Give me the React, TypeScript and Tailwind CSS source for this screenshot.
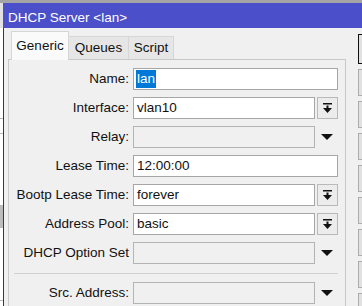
import { ReactNode } from "react";

type Kind = "text" | "select" | "disabled";

interface Row {
  label: string;
  value?: string;
  kind: Kind;
  selected?: boolean;
}

const rows: Row[] = [
  { label: "Name:", value: "lan", kind: "text", selected: true },
  { label: "Interface:", value: "vlan10", kind: "select" },
  { label: "Relay:", kind: "disabled" },
  { label: "Lease Time:", value: "12:00:00", kind: "text" },
  { label: "Bootp Lease Time:", value: "forever", kind: "select" },
  { label: "Address Pool:", value: "basic", kind: "select" },
  { label: "DHCP Option Set", kind: "disabled" },
];

const DropIcon = () => (
  <svg width="9" height="10" viewBox="0 0 9 10">
    <rect x="0" y="0" width="9" height="1.5" fill="#111" />
    <rect x="3.5" y="2.5" width="2" height="3" fill="#111" />
    <polygon points="0,5 9,5 4.5,10" fill="#111" />
  </svg>
);

const Triangle = () => (
  <svg width="12" height="6" viewBox="0 0 12 6">
    <polygon points="0,0 12,0 6,6" fill="#111" />
  </svg>
);

const Field = ({ row }: { row: Row }) => {
  let control: ReactNode;
  if (row.kind === "text") {
    control = (
      <div
        className={`flex-1 h-full border border-[#a6a6a6] bg-white flex items-center ${
          row.selected ? "pl-[2px]" : "pl-[3px]"
        }`}
      >
        {row.selected ? (
          <span className="bg-[#0078d7] text-white px-[1px] leading-[18px]">
            {row.value}
          </span>
        ) : (
          row.value
        )}
      </div>
    );
  } else if (row.kind === "select") {
    control = (
      <>
        <div className="w-[182px] h-full border border-[#a6a6a6] bg-white flex items-center pl-[3px]">
          {row.value}
        </div>
        <div className="ml-[2px] w-[21px] h-full border border-[#b9b9b9] bg-[#ececec] flex items-center justify-center">
          <DropIcon />
        </div>
      </>
    );
  } else {
    control = (
      <>
        <div className="w-[182px] h-full border border-[#b4b4b4] bg-[#f0f0f0]" />
        <div className="flex-1 h-full flex items-center justify-center">
          <Triangle />
        </div>
      </>
    );
  }

  return (
    <div className="flex h-[22px] items-center gap-[4px]">
      <div className="w-[120px] text-right whitespace-nowrap">{row.label}</div>
      <div className="flex flex-1 h-full">{control}</div>
    </div>
  );
};

const sideButtons = [0, 1, 2, 3, 4, 5, 6, 7, 8];

export default function App() {
  return (
    <div
      className="w-[362px] h-[306px] overflow-hidden flex flex-col bg-[#f0f0f0] text-[13.5px] text-[#111]"
      style={{ fontFamily: '"Liberation Sans", Arial, sans-serif' }}
    >
      <div className="h-[3px] shrink-0 bg-[#a4a4a4]" />
      <div className="flex flex-1 min-h-0">
        {/* background window peeking on the left */}
        <div className="w-[3px] shrink-0 flex flex-col bg-white">
          <div className="h-[25px] bg-[#e2e2e2]" />
          <div className="mt-[90px] h-px bg-[#b8b8b8]" />
          <div className="mt-[14px] h-px bg-[#b8b8b8]" />
          <div className="mt-[71px] h-[23px] bg-[#bdbdbd]" />
          <div className="mt-[72px] h-px bg-[#b8b8b8]" />
        </div>

        <div className="flex-1 flex flex-col min-w-0">
          <div className="h-[25px] shrink-0 bg-[#4b4fc9] text-white pl-[5px] pt-[7px] leading-[15px] whitespace-nowrap">
            DHCP Server &lt;lan&gt;
          </div>

          <div className="flex-1 flex border-l border-[#3a3a3a] bg-[#f0f0f0]">
            <div className="w-[342px] shrink-0 flex flex-col pt-[3px]">
              <div className="flex items-end h-[28px] ml-[7px]">
                <div className="relative z-10 -mb-px h-[29px] w-[58px] bg-[#fafafa] border border-b-0 border-[#d6d6d6] flex items-center justify-center">
                  Generic
                </div>
                <div className="h-[23px] w-[60px] bg-[#e6e6e6] border border-b-0 border-l-0 border-[#d6d6d6] flex items-center justify-center">
                  Queues
                </div>
                <div className="h-[23px] w-[45px] bg-[#e6e6e6] border border-b-0 border-l-0 border-[#d6d6d6] flex items-center justify-center">
                  Script
                </div>
              </div>

              <div className="ml-[4px] h-[260px] border border-[#c8c8c8] flex flex-col gap-[7px] pt-[8px] pr-[7px]">
                {rows.map((row) => (
                  <Field key={row.label} row={row} />
                ))}
                <div className="mt-[2px] mb-[1px] ml-[5px] h-px bg-[#d0d0d0]" />
                <Field row={{ label: "Src. Address:", kind: "disabled" }} />
              </div>
            </div>

            <div className="ml-[12px] w-[80px] shrink-0 flex flex-col gap-[5px] pt-[6px]">
              {sideButtons.map((i) => (
                <div
                  key={i}
                  className={`shrink-0 bg-[#e1e1e1] border ${
                    i === 0 ? "h-[30px] border-[#111]" : "h-[27px] border-[#adadad]"
                  }`}
                />
              ))}
            </div>
          </div>
        </div>
      </div>
    </div>
  );
}
